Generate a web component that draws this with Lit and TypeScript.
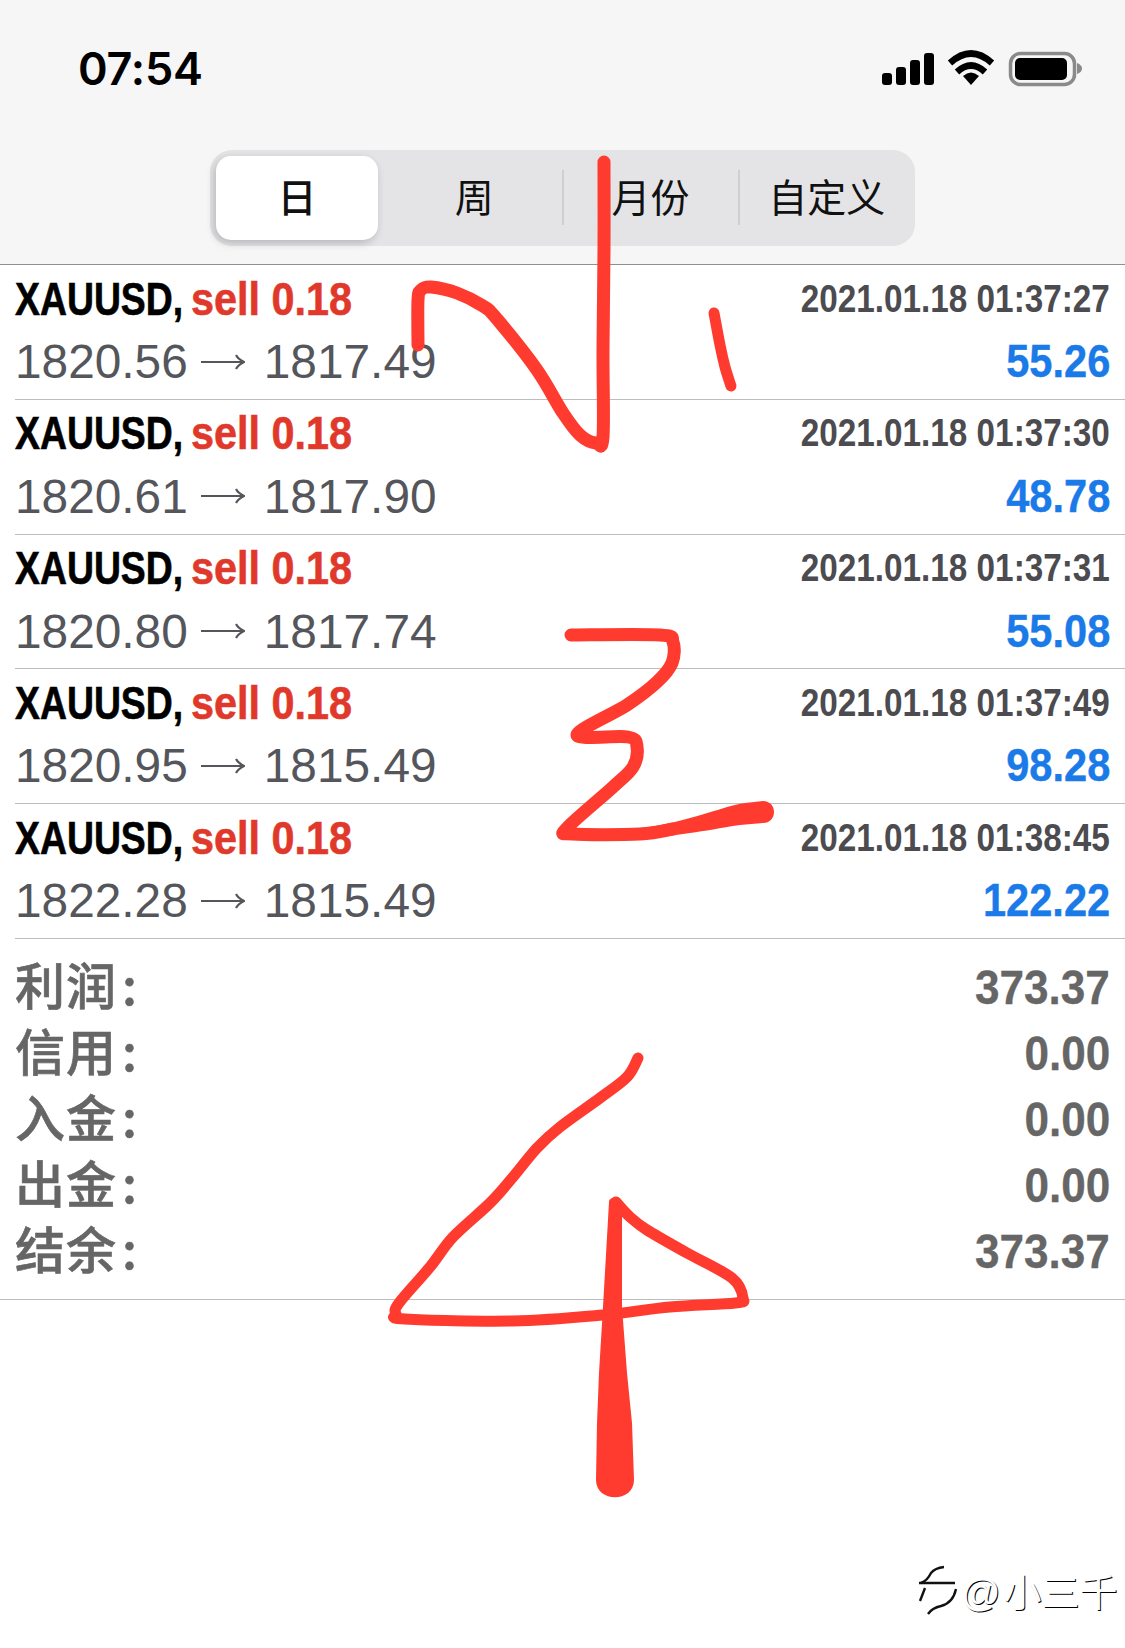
import { LitElement, html, css, svg } from "lit";
import { customElement } from "lit/decorators.js";

type P = [number, number];
const smooth = (p: P[]) => {
  let d = `M${p[0][0]} ${p[0][1]}`;
  for (let i = 0; i < p.length - 1; i++) {
    const a = p[Math.max(i - 1, 0)], b = p[i], c = p[i + 1], e = p[Math.min(i + 2, p.length - 1)];
    const t = 6;
    d += ` C${(b[0] + (c[0] - a[0]) / t).toFixed(1)} ${(b[1] + (c[1] - a[1]) / t).toFixed(1)} ${(c[0] - (e[0] - b[0]) / t).toFixed(1)} ${(c[1] - (e[1] - b[1]) / t).toFixed(1)} ${c[0]} ${c[1]}`;
  }
  return d;
};

const S1: P[] = [[418, 345], [418, 300], [421, 290], [431, 287], [457, 293], [483, 306], [497, 319], [537, 370], [563, 413], [580, 435], [596, 443], [603, 437], [603, 350], [604, 250], [604, 162]];
const S2: P[] = [[714, 313], [720, 345], [725, 367], [731, 386]];
const S3: P[] = [[571, 635], [660, 635], [673, 642], [672, 663], [657, 682], [627, 705], [577, 735], [628, 737], [637, 747], [633, 767], [613, 787], [567, 828], [573, 834], [640, 834], [673, 829]];
const S4: P[] = [[638, 1058], [627, 1077], [600, 1098], [560, 1127], [537, 1148], [513, 1177], [490, 1203], [453, 1237], [430, 1267], [399, 1303], [396, 1314], [405, 1319], [513, 1321], [603, 1315], [670, 1307], [735, 1303], [743, 1298], [732, 1278], [687, 1253], [647, 1230], [630, 1217], [616, 1202]];

const rows = [
  ["1820.56", "1817.49", "2021.01.18 01:37:27", "55.26"],
  ["1820.61", "1817.90", "2021.01.18 01:37:30", "48.78"],
  ["1820.80", "1817.74", "2021.01.18 01:37:31", "55.08"],
  ["1820.95", "1815.49", "2021.01.18 01:37:49", "98.28"],
  ["1822.28", "1815.49", "2021.01.18 01:38:45", "122.22"],
];
const summary = [["利润", "373.37"], ["信用", "0.00"], ["入金", "0.00"], ["出金", "0.00"], ["结余", "373.37"]];

@customElement("app-root")
export class AppRoot extends LitElement {
  static styles = css`
    :host { display: block; position: relative; width: 1125px; height: 1648px; background: #fff; overflow: hidden; font-family: "Liberation Sans", sans-serif; }
    .top { box-sizing: border-box; background: #f6f6f6; border-bottom: 1px solid #8f8f8f; height: 265px; padding-top: 47px; }
    .status { display: flex; align-items: center; justify-content: space-between; height: 44px; padding: 0 43px 0 78px; }
    .time { font: 600 45px/44px Inter, sans-serif; color: #000; letter-spacing: -.2px; }
    .seg { display: grid; grid-template-columns: repeat(4, 1fr); width: 705px; height: 96px; margin: 59px 0 0 210px; background: #e4e4e6; border-radius: 22px; }
    .seg div { position: relative; display: flex; align-items: center; justify-content: center; font: 400 39px "Noto Sans CJK SC", sans-serif; color: #111; padding-bottom: 6px; box-sizing: border-box; }
    .seg div.on { background: #fff; border-radius: 15px; margin: 6px 8px 6px 6px; box-shadow: -2px 3px 8px rgba(0, 0, 0, .2); font-weight: 500; }
    .seg div.sep::after { content: ""; position: absolute; right: -1px; top: 20px; height: 55px; width: 2px; background: #cfcfd1; }
    .row { height: 134.75px; box-sizing: border-box; margin-left: 15px; padding: 1.5px 15px 0 0; border-bottom: 1px solid #bdbdbd; }
    .line { display: flex; justify-content: space-between; align-items: center; height: 63px; white-space: nowrap; }
    .left { display: flex; }
    .sym, .side { display: inline-block; font-size: 47px; font-weight: 700; transform-origin: left center; -webkit-text-stroke: .6px currentColor; }
    .sym { width: 176px; color: #000; transform: scaleX(.795); }
    .side { color: #e0392b; transform: scaleX(.88); }
    .date { font-size: 38px; font-weight: 700; color: #4b4b50; transform: translateY(.5px) scaleX(.876); transform-origin: right center; }
    .price { display: flex; align-items: center; font-size: 47.8px; color: #55565b; padding-top: 1px; }
    .price svg { margin: 0 19px 0 13px; }
    .profit { font-size: 46.5px; font-weight: 700; color: #1a7ae8; transform: scaleX(.895); transform-origin: right center; -webkit-text-stroke: .4px currentColor; }
    .sum { box-sizing: border-box; height: 361px; padding: 15px 15px 0; border-bottom: 1px solid #bdbdbd; }
    .sum .item { display: flex; justify-content: space-between; align-items: center; height: 66px; color: #666; }
    .lab { font: 500 50px/60px "Noto Sans CJK SC", sans-serif; letter-spacing: 1px; padding-bottom: 7px; -webkit-text-stroke: .6px currentColor; }
    .lab span { margin-left: 5px; }
    .val { font-size: 49px; font-weight: 700; transform: scaleX(.9); transform-origin: right center; -webkit-text-stroke: .3px currentColor; }
    .ink { position: absolute; inset: 0; width: 1125px; height: 1648px; pointer-events: none; }
    .mark { position: absolute; left: 961px; top: 1566px; font: 400 38px/48px "Noto Sans CJK SC", sans-serif; color: #fff; text-shadow: 1px 1px 0 #000; white-space: nowrap; }
    .mark b { font: 400 39px/48px "Liberation Sans", sans-serif; margin-right: 3px; }
  `;

  render() {
    return html`
      <div class="top">
        <div class="status">
          <span class="time">07:54</span>
          <svg width="200" height="44" viewBox="882 47 200 44">
            <g fill="#000">
              <rect x="882" y="73" width="10" height="12" rx="3"/>
              <rect x="896" y="67" width="10" height="18" rx="3"/>
              <rect x="910" y="60" width="10" height="25" rx="3"/>
              <rect x="924" y="53" width="10" height="32" rx="3"/>
              <path d="M971 85 L963 76 Q971 69 979 76 Z"/>
            </g>
            <g fill="none" stroke="#000" stroke-width="6.5">
              <path d="M950 63 Q971 44 992 63"/>
              <path d="M957 72 Q971 59 985 72"/>
            </g>
            <rect x="1010.5" y="53.5" width="64" height="31" rx="10" fill="none" stroke="#8a8a8a" stroke-width="3.5"/>
            <rect x="1015" y="58" width="52" height="22" rx="5" fill="#000"/>
            <path d="M1077 63 Q1082 65 1082 68.5 Q1082 72 1077 74 Z" fill="#8a8a8a"/>
          </svg>
        </div>
        <div class="seg">
          <div class="on">日</div>
          <div class="sep">周</div>
          <div class="sep">月份</div>
          <div>自定义</div>
        </div>
      </div>
      ${rows.map((r) => html`
        <div class="row">
          <div class="line">
            <div class="left"><span class="sym">XAUUSD,</span><span class="side">sell 0.18</span></div>
            <span class="date">${r[2]}</span>
          </div>
          <div class="line">
            <span class="price">${r[0]}
              <svg width="44" height="18" viewBox="0 0 44 18"><path d="M0 9 H42 M35 2 Q37 6 43 9 Q37 12 35 16" fill="none" stroke="#55565b" stroke-width="2.2"/></svg>
              ${r[1]}</span>
            <span class="profit">${r[3]}</span>
          </div>
        </div>`)}
      <div class="sum">
        ${summary.map((s) => html`
          <div class="item">
            <span class="lab">${s[0]}<span>:</span></span>
            <span class="val">${s[1]}</span>
          </div>`)}
      </div>
      <svg class="ink" viewBox="0 0 1125 1648">
        <g fill="none" stroke="#ff3b30" stroke-width="13" stroke-linecap="round" stroke-linejoin="round">
          ${[S1, S3].map((s) => svg`<path d=${smooth(s)}/>`)}
          <path d=${smooth(S2)} stroke-width="11"/>
          <path d=${smooth(S4)} stroke-width="11"/>
        </g>
        <g fill="#ff3b30">
          <path d="M640 828 C660 826 675 822 690 818 C710 813 730 805 745 803 L763 801 C770 801 774 806 774 812 C774 818 770 823 763 823 L740 825 C720 828 705 831 690 833 L640 840 Z"/>
          <path d="M609 1202 C609 1196 621 1196 622 1202 L622 1307 L627 1373 L632 1423 L634 1480 C634 1503 596 1503 596 1480 L597 1423 L599 1373 L603 1307 Z"/>
        </g>
        <g fill="none" stroke="#111" stroke-width="2.4">
          <path d="M921 1583 Q927 1581 931 1573 Q935 1568 944 1567"/>
          <path d="M919 1583 L955 1583"/>
          <path d="M925 1588 L920 1601"/>
          <path d="M956 1589 Q953 1603 941 1606 Q932 1608 928 1614"/>
        </g>
      </svg>
      <div class="mark"><b>@</b>小三千</div>
    `;
  }
}
